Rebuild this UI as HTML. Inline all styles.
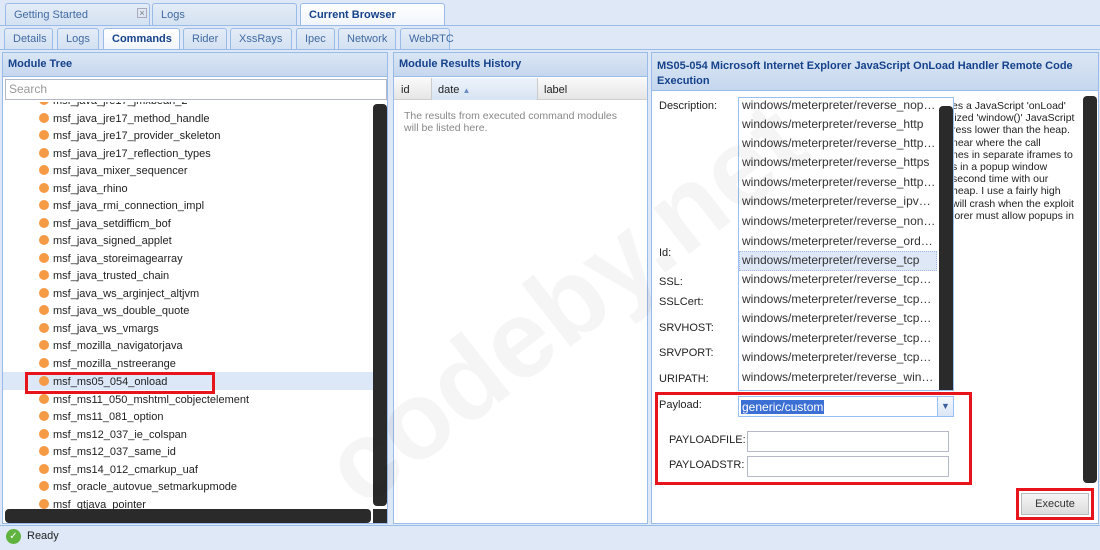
<!DOCTYPE html><html><head><style>
*{box-sizing:border-box;margin:0;padding:0}
body{width:1100px;height:550px;overflow:hidden;background:#dfe8f6;font-family:"Liberation Sans",sans-serif;font-size:11px;color:#222;position:relative}
.a{position:absolute}
.tab{position:absolute;border:1px solid #99bbe8;border-bottom:none;border-radius:3px 3px 0 0;background:linear-gradient(#e4ecf7,#d3e1f1);color:#416aa3;padding-left:8px;font-size:11px}
.tab.on{background:linear-gradient(#fff,#f0f5fb);color:#15428b;font-weight:bold}
.panel{position:absolute;background:#fff;border:1px solid #99bbe8}
.hd{position:absolute;left:0;right:0;top:0;background:linear-gradient(#dae6f4,#c6d7ee);color:#15428b;font-weight:bold;font-size:11px;padding:5px 5px;border-bottom:1px solid #99bbe8}
.it{position:absolute;left:36px;font-size:11px;height:17px;line-height:17px;white-space:nowrap}
.it:before{content:"";display:inline-block;width:10px;height:10px;border-radius:50%;background:#f59a45;margin-right:4px;vertical-align:-1px}
.dd{position:absolute;left:3px;font-size:12px;height:19px;line-height:19px;white-space:nowrap;color:#333}
.lb{position:absolute;left:7px;font-size:11px}
.inp{position:absolute;background:#fff;border:1px solid #b5b8c8}
</style></head><body>
<div class="tab" style="left:5px;top:3px;width:145px;height:23px;line-height:22px;font-weight:normal">Getting Started<span class="a" style="left:131px;top:4px;width:10px;height:10px;line-height:9px;font-size:9px;color:#777;border:1px solid #aab;text-align:center">×</span></div>
<div class="tab" style="left:152px;top:3px;width:145px;height:23px;line-height:22px">Logs</div>
<div class="tab on" style="left:300px;top:3px;width:145px;height:23px;line-height:22px">Current Browser</div>
<div class="a" style="left:0;top:25px;width:1100px;height:1px;background:#99bbe8"></div>
<div class="tab" style="left:4px;top:28px;width:49px;height:21px;line-height:20px">Details</div>
<div class="tab" style="left:57px;top:28px;width:42px;height:21px;line-height:20px">Logs</div>
<div class="tab on" style="left:103px;top:28px;width:77px;height:22px;line-height:20px;padding-left:8px">Commands</div>
<div class="tab" style="left:183px;top:28px;width:44px;height:21px;line-height:20px">Rider</div>
<div class="tab" style="left:230px;top:28px;width:62px;height:21px;line-height:20px">XssRays</div>
<div class="tab" style="left:296px;top:28px;width:39px;height:21px;line-height:20px">Ipec</div>
<div class="tab" style="left:338px;top:28px;width:58px;height:21px;line-height:20px">Network</div>
<div class="tab" style="left:400px;top:28px;width:50px;height:21px;line-height:20px">WebRTC</div>
<div class="a" style="left:0;top:49px;width:1100px;height:1px;background:#99bbe8"></div>

<div class="panel" style="left:2px;top:52px;width:386px;height:472px">
<div class="hd" style="height:24px">Module Tree</div>
<div class="inp" style="left:2px;top:26px;width:382px;height:21px;color:#999;font-size:12px;padding:2px 3px">Search</div>
<div class="a" style="left:0;top:49px;width:370px;height:408px;overflow:hidden">
<div class="a" style="left:0;top:270px;width:370px;height:18px;background:#dce8f8"></div>
<div class="it" style="top:-9px">msf_java_jre17_jmxbean_2</div>
<div class="it" style="top:9px">msf_java_jre17_method_handle</div>
<div class="it" style="top:26px">msf_java_jre17_provider_skeleton</div>
<div class="it" style="top:44px">msf_java_jre17_reflection_types</div>
<div class="it" style="top:61px">msf_java_mixer_sequencer</div>
<div class="it" style="top:79px">msf_java_rhino</div>
<div class="it" style="top:96px">msf_java_rmi_connection_impl</div>
<div class="it" style="top:114px">msf_java_setdifficm_bof</div>
<div class="it" style="top:131px">msf_java_signed_applet</div>
<div class="it" style="top:149px">msf_java_storeimagearray</div>
<div class="it" style="top:166px">msf_java_trusted_chain</div>
<div class="it" style="top:184px">msf_java_ws_arginject_altjvm</div>
<div class="it" style="top:201px">msf_java_ws_double_quote</div>
<div class="it" style="top:219px">msf_java_ws_vmargs</div>
<div class="it" style="top:236px">msf_mozilla_navigatorjava</div>
<div class="it" style="top:254px">msf_mozilla_nstreerange</div>
<div class="it" style="top:272px">msf_ms05_054_onload</div>
<div class="it" style="top:290px">msf_ms11_050_mshtml_cobjectelement</div>
<div class="it" style="top:307px">msf_ms11_081_option</div>
<div class="it" style="top:325px">msf_ms12_037_ie_colspan</div>
<div class="it" style="top:342px">msf_ms12_037_same_id</div>
<div class="it" style="top:360px">msf_ms14_012_cmarkup_uaf</div>
<div class="it" style="top:377px">msf_oracle_autovue_setmarkupmode</div>
<div class="it" style="top:395px">msf_qtjava_pointer</div>
</div>
<div class="a" style="left:22px;top:319px;width:190px;height:22px;border:3px solid #e8141c"></div>
<div class="a" style="left:370px;top:51px;width:14px;height:402px;background:#2a2a2a;border-radius:4px"></div>
<div class="a" style="left:2px;top:456px;width:366px;height:14px;background:#2a2a2a;border-radius:4px"></div>
<div class="a" style="left:370px;top:456px;width:14px;height:14px;background:#2a2a2a"></div>
</div>

<div class="panel" style="left:393px;top:52px;width:255px;height:472px">
<div class="hd" style="height:24px">Module Results History</div>
<div class="a" style="left:0;top:25px;width:253px;height:22px;background:linear-gradient(#f9f9f9,#e6e6e6);border-bottom:1px solid #d0d0d0"></div>
<div class="a" style="left:37px;top:25px;width:107px;height:22px;background:linear-gradient(#eef3fb,#d8e4f3);border-left:1px solid #ccc;border-right:1px solid #ccc"></div>
<div class="a" style="left:7px;top:31px">id</div>
<div class="a" style="left:44px;top:31px">date <span style="color:#6a8cc4;font-size:8px">▲</span></div>
<div class="a" style="left:150px;top:31px">label</div>
<div class="a" style="left:10px;top:57px;color:#888;font-size:10.5px;line-height:12px;width:230px">The results from executed command modules will be listed here.</div>
</div>

<div class="panel" style="left:651px;top:52px;width:448px;height:472px">
<div class="hd" style="height:38px;line-height:15px;padding-top:6px">MS05-054 Microsoft Internet Explorer JavaScript OnLoad Handler Remote Code Execution</div>
<div class="lb" style="top:47px">Description:</div>
<div class="a" style="left:300px;top:47px;width:130px;font-size:10.5px;line-height:12.2px;color:#222">es a JavaScript 'onLoad'<br>lized 'window()' JavaScript<br>ress lower than the heap.<br>near where the call<br>nes in separate iframes to<br>s in a popup window<br>second time with our<br>heap. I use a fairly high<br>will crash when the exploit<br>lorer must allow popups in</div>
<div class="lb" style="top:194px">Id:</div>
<div class="lb" style="top:223px">SSL:</div>
<div class="lb" style="top:243px">SSLCert:</div>
<div class="lb" style="top:269px">SRVHOST:</div>
<div class="lb" style="top:294px">SRVPORT:</div>
<div class="lb" style="top:320px">URIPATH:</div>
<div class="a" style="left:86px;top:44px;width:216px;height:294px;background:#fff;border:1px solid #98c0f4;overflow:hidden">
<div class="a" style="left:0;top:153px;width:198px;height:20px;background:#dfe8f6;border:1px dotted #a3bae9"></div>
<div class="dd" style="top:-2px">windows/meterpreter/reverse_nop…</div>
<div class="dd" style="top:17px">windows/meterpreter/reverse_http</div>
<div class="dd" style="top:36px">windows/meterpreter/reverse_http…</div>
<div class="dd" style="top:55px">windows/meterpreter/reverse_https</div>
<div class="dd" style="top:75px">windows/meterpreter/reverse_http…</div>
<div class="dd" style="top:94px">windows/meterpreter/reverse_ipv…</div>
<div class="dd" style="top:114px">windows/meterpreter/reverse_non…</div>
<div class="dd" style="top:134px">windows/meterpreter/reverse_ord…</div>
<div class="dd" style="top:153px">windows/meterpreter/reverse_tcp</div>
<div class="dd" style="top:172px">windows/meterpreter/reverse_tcp…</div>
<div class="dd" style="top:192px">windows/meterpreter/reverse_tcp…</div>
<div class="dd" style="top:211px">windows/meterpreter/reverse_tcp…</div>
<div class="dd" style="top:231px">windows/meterpreter/reverse_tcp…</div>
<div class="dd" style="top:250px">windows/meterpreter/reverse_tcp…</div>
<div class="dd" style="top:270px">windows/meterpreter/reverse_win…</div>
<div class="a" style="left:200px;top:8px;width:14px;height:290px;background:#2a2a2a;border-radius:4px"></div>
</div>
<div class="lb" style="top:346px">Payload:</div>
<div class="inp" style="left:86px;top:343px;width:216px;height:21px;border-color:#98c0f4"><span class="a" style="left:2px;top:3px;background:#3b6fd4;color:#fff;font-size:12px;padding:0 1px">generic/custom</span><span class="a" style="right:0;top:0;width:16px;height:19px;background:linear-gradient(#f4f8fd,#dbe6f5);border-left:1px solid #98c0f4;color:#3a5f9a;font-size:9px;text-align:center;line-height:19px">▼</span></div>
<div class="lb" style="left:17px;top:381px">PAYLOADFILE:</div>
<div class="inp" style="left:95px;top:378px;width:202px;height:21px"></div>
<div class="lb" style="left:17px;top:406px">PAYLOADSTR:</div>
<div class="inp" style="left:95px;top:403px;width:202px;height:21px"></div>
<div class="a" style="left:3px;top:339px;width:317px;height:93px;border:3px solid #e8141c"></div>
<div class="a" style="left:431px;top:43px;width:14px;height:387px;background:#2a2a2a;border-radius:4px"></div>
<div class="a" style="left:364px;top:435px;width:78px;height:32px;border:3px solid #e8141c"></div>
<div class="a" style="left:369px;top:440px;width:68px;height:22px;background:linear-gradient(#f5f5f5,#dcdcdc);border:1px solid #bbb;text-align:center;line-height:20px;color:#333">Execute</div>
</div>

<div class="a" style="left:250px;top:250px;transform:rotate(-38deg);transform-origin:left top;font-size:110px;font-weight:bold;color:rgba(0,0,0,0.04);white-space:nowrap;top:430px;left:300px">codeby.net</div>

<div class="a" style="left:0;top:525px;width:1100px;height:25px;background:#dfe8f6;border-top:1px solid #99bbe8"></div>
<div class="a" style="left:6px;top:529px;width:15px;height:15px;border-radius:50%;background:#5fb33e;color:#fff;font-size:10px;text-align:center;line-height:15px">✓</div>
<div class="a" style="left:27px;top:530px;font-size:11px">Ready</div>
</body></html>
